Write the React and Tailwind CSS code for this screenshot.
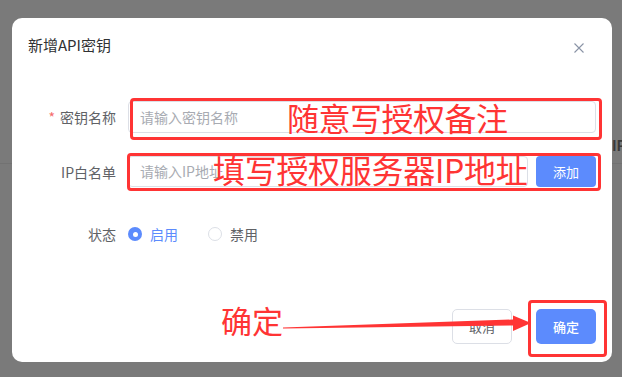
import React from "react";

const font = { fontFamily: '"Noto Sans CJK SC", "Noto Sans", sans-serif' };

export default function App() {
  return (
    <div
      className="relative w-[622px] h-[377px] overflow-hidden bg-[#7a7a7a]"
      style={font}
    >
      {/* faint background page content */}
      <div className="absolute left-0 top-[163px] w-full h-px bg-[#727272]" />
      <div className="absolute left-[612px] top-[135px] text-[14px] leading-[20px] font-bold text-[#3a3a3a]">
        IP
      </div>

      {/* modal */}
      <div className="absolute left-[12px] top-[18px] w-[600px] h-[344px] bg-white rounded-[10px] flex flex-col">
        {/* header */}
        <div className="flex items-start justify-between pt-[16px] pl-[16px] pr-[28px]">
          <div className="text-[15px] leading-[22px] text-[#303133]">新增API密钥</div>
          <svg width="10" height="10" viewBox="0 0 10 10" className="mt-[9px]">
            <path d="M0.5 0.5 L9.5 9.5 M9.5 0.5 L0.5 9.5" stroke="#8a94a6" strokeWidth="1.1" />
          </svg>
        </div>

        {/* row 1 */}
        <div className="flex items-center mt-[45px] pr-[16px]">
          <div className="w-[104px] text-right text-[14px] leading-[20px] text-[#606266]">
            <span className="text-[#f56c6c] mr-[5px]">*</span>密钥名称
          </div>
          <div className="ml-[12px] flex-1 h-[32px] border border-[#dcdfe6] rounded-[4px] flex items-center px-[11px] text-[14px] text-[#a8abb2]">
            请输入密钥名称
          </div>
        </div>

        {/* row 2 */}
        <div className="flex items-center mt-[23px] pr-[16px]">
          <div className="w-[104px] text-right text-[14px] leading-[20px] text-[#606266]">IP白名单</div>
          <div className="ml-[12px] flex-1 h-[31px] border border-[#dcdfe6] rounded-[4px] flex items-center px-[11px] text-[14px] text-[#a8abb2]">
            请输入IP地址
          </div>
          <div className="ml-[8px] w-[60px] h-[31px] rounded-[4px] bg-[#5c8bfd] flex items-center justify-center text-[13px] text-white">
            添加
          </div>
        </div>

        {/* row 3 */}
        <div className="flex items-center mt-[31px] h-[32px]">
          <div className="w-[104px] text-right text-[14px] leading-[20px] text-[#606266]">状态</div>
          <div className="ml-[12px] flex items-center">
            <span className="w-[14px] h-[14px] rounded-full bg-[#5c8bfd] flex items-center justify-center">
              <span className="w-[5px] h-[5px] rounded-full bg-white" />
            </span>
            <span className="ml-[8px] text-[14px] text-[#5c8bfd] mr-[30px]">启用</span>
            <span className="w-[14px] h-[14px] rounded-full border border-[#dcdfe6] bg-white" />
            <span className="ml-[8px] text-[14px] text-[#606266]">禁用</span>
          </div>
        </div>

        {/* footer */}
        <div className="flex justify-end gap-[24px] mt-[59px] pr-[16px]">
          <div className="w-[60px] h-[35px] rounded-[5px] border border-[#dcdfe6] bg-white flex items-center justify-center text-[13px] text-[#606266]">
            取消
          </div>
          <div className="w-[60px] h-[35px] rounded-[5px] bg-[#5c8bfd] flex items-center justify-center text-[13px] font-medium text-white">
            确定
          </div>
        </div>
      </div>

      {/* annotations */}
      <div className="absolute left-[130px] top-[98px] w-[472px] h-[42px] border-[3px] border-[#ff3434] rounded-[4px]" />
      <div className="absolute left-[127px] top-[153px] w-[474px] h-[38px] border-[3px] border-[#ff3434] rounded-[4px]" />
      <div className="absolute left-[528px] top-[300px] w-[79px] h-[57px] border-[3px] border-[#ff3434] rounded-[4px]" />

      <div className="absolute left-[287px] top-[98px] text-[32px] tracking-[-0.5px] leading-[38px] text-[#ff3434] whitespace-nowrap">
        随意写授权备注
      </div>
      <div className="absolute left-[213px] top-[150px] text-[32px] tracking-[-0.3px] leading-[38px] text-[#ff3434] whitespace-nowrap">
        填写授权服务器IP地址
      </div>
      <div className="absolute left-[221px] top-[302px] text-[31px] leading-[36px] text-[#ff3434] whitespace-nowrap">
        确定
      </div>

      <svg className="absolute left-0 top-0" width="622" height="377" viewBox="0 0 622 377">
        <polygon
          points="283,327.5 513,319.5 513,315.5 531,323 513,331 513,325.5 283,328.5"
          fill="#ff3434"
        />
      </svg>
    </div>
  );
}
